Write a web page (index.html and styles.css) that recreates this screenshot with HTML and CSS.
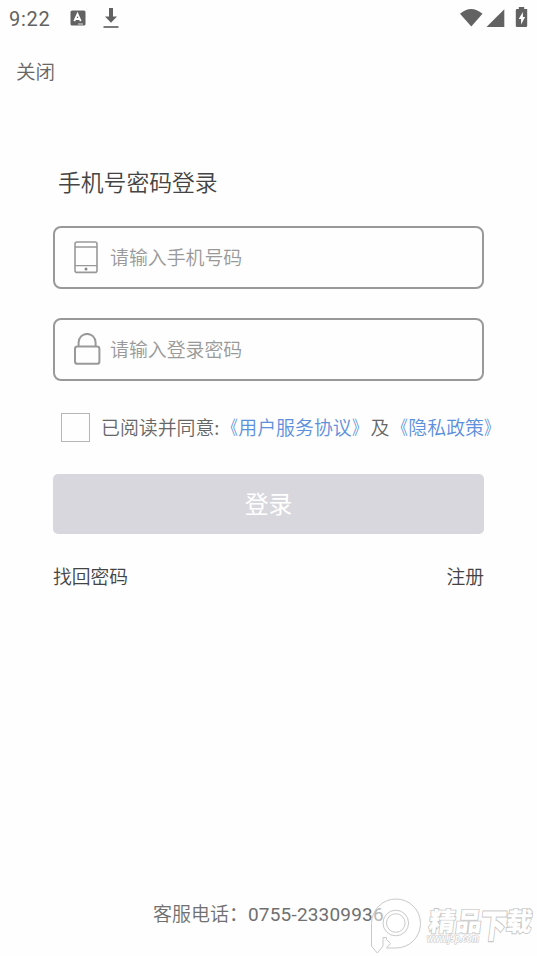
FILE: index.html
```html
<!DOCTYPE html>
<html lang="zh-CN">
<head>
<meta charset="utf-8">
<meta name="viewport" content="width=device-width, initial-scale=1">
<title>登录</title>
<link rel="stylesheet" href="styles.css">
</head>
<body>
<div class="screen">
  <header class="status">
    <span class="time">9:22</span>
    <svg class="ic-input" width="16" height="16" viewBox="0 0 16 16"><rect x=".5" y=".5" width="15" height="15" rx="1.6" fill="#626262"/><path d="M4.3 11.2 7.5 4l3.2 7.2M5.6 9h3.8" fill="none" stroke="#fff" stroke-width="1.8"/><path d="M8 14h5" stroke="#ddd" stroke-width="1"/></svg>
    <svg class="ic-down" width="16" height="21" viewBox="0 0 16 21"><path d="M6 0h4v8.500h4L8 14.700 2 8.500h4z" fill="#626262"/><path d="M.5 19h15" stroke="#626262" stroke-width="1.7"/></svg>
    <svg class="ic-system" width="68" height="22" viewBox="0 0 68 22"><path d="M0 5.8Q11 -4 22.5 5.8L11.3 18.5z" fill="#626262"/><path d="M44.3 1.2V19H26.5z" fill="#626262"/><path d="M58.8 -1h5.4v2H67.2V17.8q0 1.2-1.2 1.2h-9q-1.2 0-1.2-1.2V2.2q0-1.2 1.2-1.2h1.8z" fill="#626262"/><path d="M62.9 4 58.7 11h2.4V16.5l4-7.4h-2.2z" fill="#fff"/></svg>
  </header>
  <nav class="top"><a class="close">关闭</a></nav>
  <main class="form">
    <h1 class="title">手机号密码登录</h1>
    <label class="field">
      <svg class="field-icon" width="28" height="34" viewBox="0 0 28 34" fill="none" stroke="#999" stroke-width="1.6"><rect x="2" y="1" width="22" height="30.4" rx="2"/><path d="M2 6h22M2 24.7h22" stroke-width="1.3"/><circle cx="13" cy="28.1" r="1.5" fill="#888" stroke="none"/></svg>
      <span>请输入手机号码</span>
    </label>
    <label class="field">
      <svg class="field-icon" width="28" height="34" viewBox="0 0 28 34" fill="none" stroke="#999" stroke-width="2"><rect x="2" y="13.6" width="24.4" height="17.2" rx="2.4"/><path d="M5.6 13.6V9.4a8.5 8.5 0 0 1 17 0v4.2"/></svg>
      <span>请输入登录密码</span>
    </label>
    <div class="agree">
      <span class="box"></span>
      <span>已阅读并同意:<a class="link"><span class="open">《</span>用户服务协议<span class="shut">》</span></a>及<a class="link"><span class="open">《</span>隐私政策<span class="shut">》</span></a></span>
    </div>
    <button class="submit">登录</button>
    <div class="links"><a>找回密码</a><a>注册</a></div>
  </main>
  <footer class="phone">客服电话：<span class="number">0755-23309936</span></footer>
  <svg class="watermark" width="170" height="60" viewBox="0 0 170 60" fill="#fff" fill-opacity=".5" stroke="#c9c9c9">
    <path d="M4.5 51V28.5A24.5 24.5 0 1 1 29 53H19.5L23.5 48.5 19.5 44.5V42.500H16V51L10.3 58z"/>
    <circle cx="28.8" cy="28" r="12.8"/>
    <circle cx="28.8" cy="28" r="9.3"/>
    <g transform="translate(61 36) skewX(-7)">
      <text class="wm-name" x="0" y="0" textLength="53" lengthAdjust="spacingAndGlyphs">精品</text>
      <text class="wm-name" transform="translate(51.5 7) scale(1 1.3)">下</text>
      <text class="wm-name" x="77" y="0">载</text>
    </g>
    <text class="wm-url" x="60" y="47" textLength="52" lengthAdjust="spacingAndGlyphs">www.j9p.com</text>
  </svg>
</div>
</body>
</html>
```
FILE: styles.css
```css
* { box-sizing: border-box; }

body {
  margin: 0;
  background: #fefefe;
  font-family: "Noto Sans CJK SC", sans-serif;
  font-weight: 350;
  color: #555;
}

.screen {
  position: relative;
  display: flex;
  flex-direction: column;
  width: 537px;
  height: 956px;
  overflow: hidden;
}

.status {
  display: flex;
  align-items: flex-start;
  height: 36px;
  padding: 8px 9px 0 9px;
}

.time {
  width: 61px;
  font: 400 20px/22px Roboto, sans-serif;
  letter-spacing: 0.7px;
  color: #626262;
}

.ic-input { margin-top: 2px; }
.ic-down { margin-left: 17px; }
.ic-system { margin-left: auto; overflow: visible; }

.top {
  height: 72px;
  padding: 20px 16px 0;
  font-size: 19.6px;
  line-height: 30px;
  color: #666;
}

.form { padding: 0 53px; }

.title {
  height: 90px;
  margin: 0 0 28px;
  padding: 58px 0 0 5px;
  font-size: 22.8px;
  line-height: 32px;
  font-weight: 350;
  color: #444;
}

.field {
  display: flex;
  align-items: center;
  gap: 9px;
  height: 63px;
  margin-bottom: 29px;
  padding: 0 18px;
  border: 2px solid #999;
  border-radius: 8px;
  font-size: 18.9px;
  line-height: 30px;
  color: #999;
}

.field span { margin-top: -2px; }

.agree {
  display: flex;
  align-items: center;
  gap: 11px;
  height: 30px;
  margin: 31px 0 0 8px;
  font-size: 18.9px;
  line-height: 30px;
  white-space: nowrap;
  color: #666;
}

.box {
  flex: none;
  width: 29px;
  height: 29px;
  border: 1px solid #b5b5b5;
}

.link { color: #5c8fdc; }

.open,
.shut {
  display: inline-block;
  transform: scaleX(0.8);
}

.open { transform-origin: right; }
.shut { transform-origin: left; }

.submit {
  display: block;
  width: 100%;
  height: 60px;
  margin: 32px 0 0;
  padding: 0 0 2px;
  border: 0;
  border-radius: 5px;
  background: #d8d7dd;
  color: #fff;
  font: 400 23.8px/58px "Noto Sans CJK SC", sans-serif;
}

.links {
  display: flex;
  justify-content: space-between;
  margin-top: 27px;
  font-size: 18.8px;
  line-height: 30px;
  color: #444;
}

.phone {
  margin: auto 0 26px 153px;
  font-size: 19px;
  line-height: 30px;
  color: #707070;
}

.number {
  font-family: Roboto, sans-serif;
  font-weight: 400;
  font-size: 19px;
  letter-spacing: 0.18px;
}

.watermark {
  position: absolute;
  left: 367px;
  top: 895px;
}

.wm-name {
  font: 900 26px "Noto Sans CJK SC", sans-serif;
  paint-order: stroke;
  fill: #fff;
  fill-opacity: 1;
  stroke: #c6c6c6;
  stroke-width: 1.6px;
}

.wm-url {
  font: italic 700 10px "Liberation Sans", sans-serif;
  paint-order: stroke;
  fill: #fff;
  fill-opacity: 1;
  stroke: #c6c6c6;
  stroke-width: 1.2px;
}
```
